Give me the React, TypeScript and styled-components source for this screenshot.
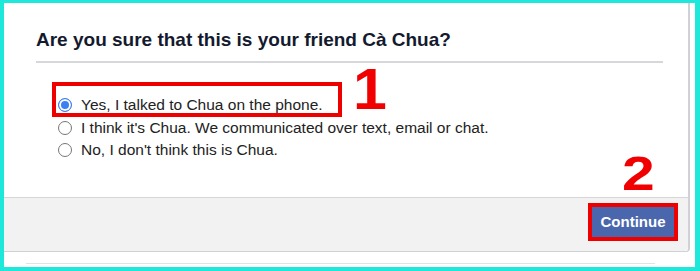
import styled, { createGlobalStyle } from 'styled-components';

const GlobalStyle = createGlobalStyle`
  html, body {
    margin: 0;
    padding: 0;
  }
  body {
    font-family: "Liberation Sans", Arial, sans-serif;
    background: #1de8d9;
  }
`;

const options = [
  { id: 'phone', label: 'Yes, I talked to Chua on the phone.', checked: true },
  { id: 'text', label: "I think it's Chua. We communicated over text, email or chat.", checked: false },
  { id: 'no', label: "No, I don't think this is Chua.", checked: false },
];

export default function App() {
  return (
    <>
      <GlobalStyle />
      <Frame>
        <Screen>
          <Dialog>
            <Title>Are you sure that this is your friend Cà Chua?</Title>
            <Divider />
            <Body>
              {options.map((opt) => (
                <Option key={opt.id}>
                  <Radio $checked={opt.checked} />
                  <span>{opt.label}</span>
                </Option>
              ))}
              <Marker />
              <StepNumber $size={58} $left={349} $top={-3} $stretch={1.05}>1</StepNumber>
            </Body>
            <Footer>
              <StepNumber $size={49} $left={618} $top={-49} $stretch={1.2}>2</StepNumber>
              <Highlight>
                <ContinueButton type="button">Continue</ContinueButton>
              </Highlight>
            </Footer>
          </Dialog>
          <UnderLayer />
        </Screen>
      </Frame>
    </>
  );
}

const Frame = styled.div`
  box-sizing: border-box;
  width: 700px;
  height: 271px;
  padding: 3px 5px 4px 4px;
`;

const Screen = styled.div`
  height: 100%;
  background: #fff;
  display: flex;
  flex-direction: column;
`;

const Dialog = styled.div`
  width: 684px;
  background: #fff;
  border-right: 2px solid #cfd1d4;
  border-bottom: 1px solid #cfd1d4;
  border-bottom-right-radius: 4px;
`;

const Title = styled.h2`
  margin: 0;
  padding: 25px 0 0 32px;
  font-size: 19px;
  line-height: 24px;
  font-weight: bold;
  color: #141a2e;
`;

const Divider = styled.div`
  height: 2px;
  background: #d5d7db;
  margin: 9px 25px 0 32px;
`;

const Body = styled.div`
  position: relative;
  padding: 31px 0 35px 54px;
  display: flex;
  flex-direction: column;
`;

const Option = styled.label`
  display: flex;
  align-items: center;
  height: 22.5px;
  font-size: 15.5px;
  color: #222;
`;

const Radio = styled.span<{ $checked: boolean }>`
  box-sizing: border-box;
  flex-shrink: 0;
  width: 14px;
  height: 14px;
  margin-right: 9px;
  border-radius: 50%;
  background: ${({ $checked }) => ($checked ? '#3b7ff2' : '#fff')};
  border: 1.3px solid ${({ $checked }) => ($checked ? '#3b7ff2' : '#767676')};
  box-shadow: ${({ $checked }) => ($checked ? 'inset 0 0 0 2px #fff' : 'none')};
`;

const Marker = styled.div`
  position: absolute;
  left: 48px;
  top: 19px;
  width: 290px;
  height: 35px;
  box-sizing: border-box;
  border: 4px solid #ee0000;
`;

const StepNumber = styled.div<{ $size: number; $left: number; $top: number; $stretch: number }>`
  position: absolute;
  left: ${({ $left }) => $left}px;
  top: ${({ $top }) => $top}px;
  font-size: ${({ $size }) => $size}px;
  line-height: 1;
  font-weight: 900;
  color: #f00000;
  transform: scaleX(${({ $stretch }) => $stretch});
  transform-origin: left top;
`;

const Footer = styled.div`
  position: relative;
  height: 54px;
  box-sizing: border-box;
  background: #f2f2f2;
  border-top: 1px solid #d4d6da;
  border-bottom-right-radius: 4px;
  display: flex;
  justify-content: flex-end;
  align-items: flex-start;
  padding: 5px 10px 0 0;
`;

const Highlight = styled.div`
  border: 4px solid #ee0000;
  display: flex;
`;

const ContinueButton = styled.button`
  width: 82px;
  height: 30px;
  border: 0;
  padding: 0;
  background: #4a66ad;
  color: #fff;
  font-family: "Liberation Sans", Arial, sans-serif;
  font-size: 15px;
  font-weight: bold;
`;

const UnderLayer = styled.div`
  margin: 11px 40px 0 22px;
  height: 1px;
  background: #e1e2e5;
`;
